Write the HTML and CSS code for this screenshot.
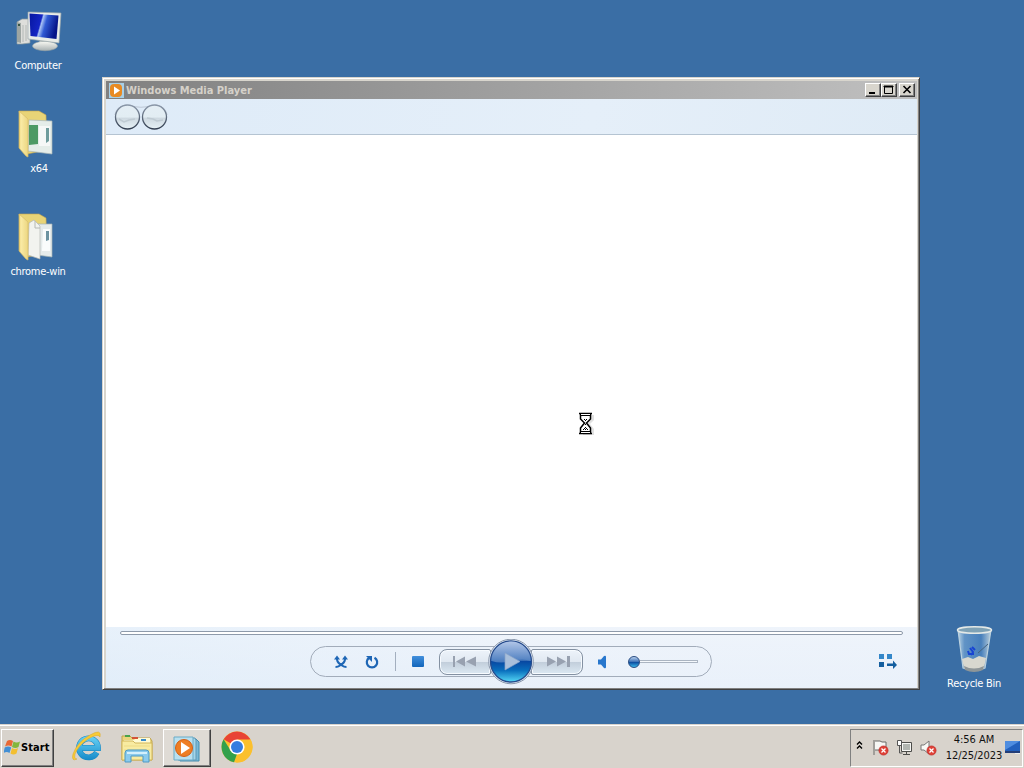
FILE: index.html
```html
<!DOCTYPE html>
<html lang="en">
<head>
<meta charset="utf-8">
<title>Windows Media Player</title>
<link rel="stylesheet" href="styles.css">
</head>
<body>
<main class="desktop">
  <div class="shortcut computer">
    <svg width="48" height="44" viewBox="0 0 48 44">
      <defs>
        <linearGradient id="screen" x1="0" x2="1" y2=".25"><stop offset="0" stop-color="#0717a0"/><stop offset=".43" stop-color="#1425c4"/><stop offset=".48" stop-color="#a9c2f4"/><stop offset=".62" stop-color="#315ad4"/><stop offset="1" stop-color="#061488"/></linearGradient>
        <linearGradient id="metal" y2="1" x2="0"><stop stop-color="#fafaf4"/><stop offset="1" stop-color="#a9b1b2"/></linearGradient>
      </defs>
      <path d="M3 14l5-3h8v24l-8 1-5 0z" fill="#dededb" stroke="#8c9b9d" stroke-width=".7"/>
      <path d="M3 14l4 1v20l-4-1z" fill="#9da5a2"/><circle cx="5" cy="17" r="1" fill="#193e2a"/>
      <path d="M9 17v17M12 17v16" stroke="#b2b8b6"/>
      <path d="M26 32h9l2 7H24z" fill="#c3c9c8"/>
      <ellipse cx="31" cy="38" rx="12.500" ry="4.700" fill="url(#metal)" stroke="#9ba4a5" stroke-width=".6"/>
      <path d="M14 4l33 1-2 30-31-4z" fill="#e9ece8" stroke="#9ba7ac" stroke-width=".7"/>
      <path d="M15.500 5.500l29 2-2 23.500-26-3z" fill="url(#screen)"/>
    </svg>
    <span>Computer</span>
  </div>
  <div class="shortcut x64">
    <svg width="42" height="52" viewBox="0 0 42 52">
      <defs><linearGradient id="fold" x2="1"><stop stop-color="#e2c35e"/><stop offset=".2" stop-color="#faeba6"/><stop offset="1" stop-color="#ecd681"/></linearGradient></defs>
      <path d="M2 3h20l7 4 1 35-20 4z" fill="#e8d477" stroke="#c7a64d" stroke-width=".6"/>
      <path d="M12 12l23 1v33l-24-3z" fill="#e5ede9" stroke="#aab8b7" stroke-width=".7"/>
      <path d="M12 17h9v19l-9 1z" fill="#4d9a64"/><path d="M22 18h11v20H22z" fill="#f6f8f7"/>
      <path d="M29 20h3v13l-3 2z" fill="#6f9c9c"/>
      <path d="M2 3l9 8v38l-2-1-7-8z" fill="url(#fold)" stroke="#d9bd67" stroke-width=".7"/>
    </svg>
    <span>x64</span>
  </div>
  <div class="shortcut chrome-folder">
    <svg width="42" height="52" viewBox="0 0 42 52">
      <path d="M2 3h20l7 4 1 35-20 4z" fill="#e8d477" stroke="#c7a64d" stroke-width=".6"/>
      <path d="M17 13h18v33l-15-2z" fill="#e5ebeb" stroke="#a4b3b4" stroke-width=".7"/>
      <path d="M26 18h7v22h-8z" fill="#fafcfc"/><path d="M29 20h3v9l-3 1z" fill="#6d93a1"/>
      <path d="M12 12l5-3 6 6v33l-12-4z" fill="#f2f3ef" stroke="#b4b8b4" stroke-width=".7"/><path d="M18 10v7h5" fill="none" stroke="#b4b8b4"/>
      <path d="M2 3l9 8v38l-2-1-7-8z" fill="url(#fold)" stroke="#d9bd67" stroke-width=".7"/>
    </svg>
    <span>chrome-win</span>
  </div>
  <div class="shortcut recycle">
    <svg width="42" height="50" viewBox="0 0 42 50">
      <defs><linearGradient id="glass" x2="1"><stop stop-color="#d2e6ef" stop-opacity=".85"/><stop offset=".2" stop-color="#6d9fd0" stop-opacity=".75"/><stop offset=".7" stop-color="#4b84c1" stop-opacity=".8"/><stop offset="1" stop-color="#d4e2e6" stop-opacity=".85"/></linearGradient></defs>
      <path d="M4 5l5 38q12 5 22 0l6-38" fill="url(#glass)" stroke="#bad1df" stroke-width="1.200"/>
      <path d="M8 34l6-2 5 2 6-3 7 2-2 10q-10 5-20 0z" fill="#d8d8cf"/><path d="M10 41q10 5 20 0l-1 4q-9 4-18 0z" fill="#8e9698"/>
      <ellipse cx="20.500" cy="5" rx="17" ry="3.300" fill="#7fa2b6" stroke="#e4e9e7" stroke-width="1.500"/>
      <path d="M16 23l3 4-2 3M20 29h-5l-1-3M21 25l-3-3" fill="none" stroke="#1744d3" stroke-width="2"/>
      <path d="M24 28l10-9" stroke="#47647e"/>
    </svg>
    <span>Recycle Bin</span>
  </div>

  <section class="window">
    <header class="titlebar">
      <svg class="title-icon" width="15" height="15" viewBox="0 0 15 15"><rect width="15" height="15" fill="#a7cfe6"/><rect x="1" y="1" width="12" height="13" rx="4" fill="#e88a22"/><path d="M5 3.500v8l6-4z" fill="#fff"/></svg>
      <h1>Windows Media Player</h1>
      <div class="window-buttons">
        <button aria-label="Minimize"><svg width="16" height="14"><path d="M4 9h6v2H4z"/></svg></button>
        <button aria-label="Maximize"><svg width="16" height="14"><path d="M3.500 3.500h8v7h-8zM3 3h9v1H3z" fill="none" stroke="#000"/></svg></button>
        <button class="close" aria-label="Close"><svg width="16" height="14"><path d="M4.500 3l7 7M11.500 3l-7 7" stroke="#000" stroke-width="1.600"/></svg></button>
      </div>
    </header>
    <nav class="toolbar">
      <svg width="56" height="32" viewBox="0 0 56 32">
        <defs><linearGradient id="nav" x2="0" y2="1"><stop stop-color="#e4eef5"/><stop offset=".5" stop-color="#e2edf3"/><stop offset=".55" stop-color="#ced9e1"/><stop offset="1" stop-color="#e6f1f6"/></linearGradient><linearGradient id="navedge" x2="0" y2="1"><stop stop-color="#8b98a9"/><stop offset="1" stop-color="#323e50"/></linearGradient></defs>
        <path d="M16 2.500Q28 6 40 2.500M2 12Q4 3 14 2M54 12Q52 3 42 2" fill="none" stroke="#bdc8d5" stroke-width="1.200"/>
        <circle cx="14.500" cy="14" r="12" fill="url(#nav)" stroke="url(#navedge)" stroke-width="1.300"/><circle cx="41.500" cy="14" r="12" fill="url(#nav)" stroke="url(#navedge)" stroke-width="1.300"/>
        <path d="M6 16l5 3 5-2 6-1M34 15l6 1 4 2 6-1" fill="none" stroke="#bfcbd3" stroke-width="1.500"/>
      </svg>
    </nav>
    <div class="content"></div>
    <footer class="player">
      <div class="seek"></div>
      <div class="control-row">
        <div class="controls">
          <svg class="shuffle" width="14" height="14" viewBox="0 0 14 14"><path d="M3 3v1.500Q3.500 8 8 10.500q2 1.500 4.500 1.500M11 3v1.500Q10.500 8 6 10.500 4 12 1.500 12" fill="none" stroke="#1e66b5" stroke-width="2"/><path d="M0 4.500L3 .500l3 4zM8 4.500l3-4 3 4z" fill="#1e66b5"/></svg>
          <svg class="repeat" width="14" height="14" viewBox="0 0 14 14"><path d="M4.300 2.800A5.200 5.200 0 1 0 9.500 2.700" fill="none" stroke="#1e66b5" stroke-width="2.200"/><path d="M1 1h6v6z" fill="#1e66b5"/></svg>
          <i class="divider"></i><i class="stop"></i>
          <div class="previous"><svg width="25" height="11" viewBox="0 0 25 11"><path d="M1 0h2v11H1zM13 .5v10L4 5.500zM24 .5v10l-10-5z" fill="#98a1b0"/></svg></div>
          <div class="play"><svg width="46" height="46" viewBox="0 0 46 46">
            <defs><linearGradient id="blue" x2="0" y2="1"><stop stop-color="#9bb5df"/><stop offset=".48" stop-color="#386db5"/><stop offset=".5" stop-color="#0848a2"/><stop offset=".72" stop-color="#096fbd"/><stop offset="1" stop-color="#54d8f6"/></linearGradient><linearGradient id="gloss" x2="0" y2="1"><stop stop-color="#b1c5e7"/><stop offset="1" stop-color="#477abe"/></linearGradient></defs>
            <circle cx="23" cy="22.500" r="22.300" fill="#e7f0fa" stroke="#8996aa"/><circle cx="23" cy="22.500" r="20.500" fill="url(#blue)" stroke="#264b8c" stroke-width="1.300"/>
            <path d="M3.500 22A19.500 19.500 0 0 1 42.500 22Q35 19 24 22T3.500 22z" fill="url(#gloss)"/><path d="M17 14v17l15-8.500z" fill="#a9bfdb" stroke="#8aa4c8" stroke-width=".7"/>
          </svg></div>
          <div class="next"><svg width="24" height="11" viewBox="0 0 24 11"><path d="M0 .5l9 5-9 5zM10 .5l9 5-9 5zM20 0h3v11h-3z" fill="#98a1b0"/></svg></div>
          <svg class="volume" width="9" height="14" viewBox="0 0 9 14"><path d="M0 4.500h3L6 1q2-1 2 1v10q0 2-2 1L3 9.500H0z" fill="#2877cd"/></svg>
          <div class="slider"><i class="thumb"></i><i class="track"></i></div>
        </div>
        <svg class="switch-view" width="18" height="15" viewBox="0 0 18 15"><path d="M0 0h5v5H0zM8 0h5v5H8z" fill="#3487c9"/><path d="M0 8h5v5H0zM8 9.500h6v-3l4 4.500-4 4v-3H8z" fill="#155f9f"/></svg>
      </div>
    </footer>
  </section>

  <svg class="cursor" width="18" height="26" viewBox="0 0 18 26">
    <path d="M5 4h11v5l-4 4 4 5v6H5z" fill="#777" opacity=".22"/>
    <path d="M2.500 3v5l4 4-4 5v5h10v-5l-4-5 4-4V3z" fill="#fff" stroke="#000" stroke-width="1.500"/><path d="M1 2.500h13M1 22.500h13" stroke="#000" stroke-width="1.300"/><path d="M3 3.500h9M3 21.500h9" stroke="#fff"/><path d="M2 4.500h11M2 20.500h11" stroke="#000"/>
    <path d="M6 8h1v1H6zM8 8h1v1H8zM7 9h1v1H7zM7 13h1v1H7zM7 16h1v1H7zM6 17h1v1H6zM8 17h1v1H8zM5 18h1v1H5zM7 18h1v1H7zM9 18h1v1H9z"/>
  </svg>
</main>

<footer class="taskbar">
  <button class="start"><svg width="17" height="17" viewBox="0 0 17 17"><path d="M3 2q3-2 6 0L7.500 7.500Q4.500 5.500 1 7.500z" fill="#e96834"/><path d="M9.500 2.500q3 2 6.500 0L14.500 8q-3 2-6.500 0z" fill="#83b73c"/><path d="M.700 8.500q3.500-2 6.500 0L5.500 14q-3-2-6 0z" fill="#438fd4"/><path d="M8 9q3 2 6 0l-1.500 5.500q-3 2-6 0z" fill="#f3bf30"/></svg><span>Start</span></button>
  <svg class="ie" width="32" height="32" viewBox="0 0 32 32">
    <defs><linearGradient id="ieblue" gradientUnits="userSpaceOnUse" x1="0" y1="4" x2="0" y2="30"><stop stop-color="#70d9fa"/><stop offset="1" stop-color="#168ac9"/></linearGradient></defs>
    <path d="M9 18H26A9.500 9.500 0 1 0 24.800 22.500" fill="none" stroke="#1789c4" stroke-width="5.800"/>
    <path d="M9 18H26A9.500 9.500 0 1 0 24.800 22.500" fill="none" stroke="url(#ieblue)" stroke-width="4.800"/>
    <path d="M5 29Q-1 32 1 24 5 12 18 5 30-2 28 7 26 3 16 9 6 16 3 24 2 29 5 29z" fill="#f8ca35" stroke="#d9a728" stroke-width=".5"/>
  </svg>
  <svg class="explorer" width="34" height="32" viewBox="0 0 34 32">
    <path d="M2 4h8l2 2h18l2 3v19H2z" fill="#ead57d" stroke="#bfa34c"/><path d="M4 8h10l2-2h14v5H4z" fill="#fffbd4"/><path d="M5 3h5v2H5z" fill="#48a34b"/><path d="M12 5h6v2h-6z" fill="#d45437"/><path d="M21 7h5v2h-5z" fill="#398bcb"/>
    <path d="M2 9h11l2 2h17v17H2z" fill="#f8eba1" stroke="#d1b65b"/><path d="M4 14h26M4 18h26" stroke="#eddb85"/>
    <path d="M5 30V21q0-3 3-3h18q3 0 3 3v9h-6v-6H11v6z" fill="#8bcbed" stroke="#4c99c5"/><path d="M7 21h20" stroke="#d4f0fc" stroke-width="2"/>
  </svg>
  <div class="task-active"><svg width="30" height="28" viewBox="0 0 30 28"><path d="M7 4h16l3 3v19H7z" fill="#79b9d6" stroke="#458caf"/><path d="M5 3h17l1 2v20H5z" fill="#a5d5e9" stroke="#6098b5"/><path d="M1 2h19v23H1z" fill="#b9e0ef" stroke="#6babc7"/><circle cx="11" cy="13" r="8.500" fill="#ee7e24" stroke="#d45f16"/><path d="M8 7v12l9-6z" fill="#fff"/></svg></div>
  <svg class="chrome" width="32" height="32" viewBox="0 0 32 32"><circle cx="16" cy="16" r="15.500" fill="#fbc02d"/><path d="M16 16L2.600 8.300A15.500 15.500 0 0 1 29.400 8.300z" fill="#e84435"/><path d="M2.600 8.300L9.900 20 16 23l-3 8.200A15.500 15.500 0 0 1 2.600 8.300z" fill="#33a14c"/><path d="M16 8.500h13.500A15.500 15.500 0 0 1 15 31.500L22.500 20z" fill="#fbc02d"/><circle cx="16" cy="16" r="7.600" fill="#fff"/><circle cx="16" cy="16" r="6" fill="#347de0"/></svg>
  <div class="tray">
    <svg class="chevrons" width="7" height="9" viewBox="0 0 7 9"><path d="M1 3.500L3.500 1 6 3.500M1 7.500L3.500 5 6 7.500" fill="none" stroke="#000" stroke-width="1.400"/></svg>
    <svg class="flag" width="18" height="18" viewBox="0 0 18 18"><path d="M2 1v15M3 2h5l2 1h4v9h-5L8 11H3" fill="#f7f7f4" stroke="#6b6b68"/><circle cx="11.500" cy="11.500" r="4.600" fill="#df4238" stroke="#b91f1c" stroke-width=".6"/><path d="M9.500 9.500l4 4M13.500 9.500l-4 4" stroke="#fff" stroke-width="1.300"/></svg>
    <svg class="network" width="17" height="17" viewBox="0 0 17 17"><path d="M5.500 3.500h10v9h-10zM7 15.500h7M10.500 13v2" fill="#f5f5f2" stroke="#4d4d4a"/><path d="M7 5h7v6H7z" fill="#b1b5b0"/><path d="M1.500 1.500h4v5h-4zM3.500 7v7h3" fill="none" stroke="#555"/><path d="M2 2h3v4H2z" fill="#fff"/></svg>
    <svg class="sound" width="18" height="18" viewBox="0 0 18 18"><path d="M1 6h3l5-4v13l-5-4H1z" fill="#f8f8f5" stroke="#777"/><circle cx="11.500" cy="11.500" r="4.600" fill="#df4238" stroke="#b91f1c" stroke-width=".6"/><path d="M9.500 9.500l4 4M13.500 9.500l-4 4" stroke="#fff" stroke-width="1.300"/></svg>
    <div class="clock"><span class="time">4:56 AM</span><span class="date">12/25/2023</span></div>
    <svg class="monitor" width="15" height="14" viewBox="0 0 15 14"><path d="M0 0h15v11H0z" fill="#2260bd"/><path d="M0 0h15L0 9z" fill="#4f8de0"/><path d="M0 10h15v2H0z" fill="#243e77"/><path d="M10 12h5v1h-5z" fill="#eee"/></svg>
  </div>
</footer>
</body>
</html>
```
FILE: styles.css
```css
* { box-sizing: border-box; }
body { width: 1024px; height: 768px; margin: 0; overflow: hidden; display: flex; flex-direction: column; background: #3a6ea5; font-family: Tahoma, "DejaVu Sans Condensed", "DejaVu Sans", sans-serif; font-stretch: condensed; font-size: 11px; color: #111; }
svg { display: block; flex: none; }
button { margin: 0; padding: 0; color: inherit; font: inherit; }
.desktop { position: relative; height: 724px; flex: none; }
.shortcut { position: absolute; width: 76px; display: flex; flex-direction: column; align-items: center; color: #fff; line-height: 14px; white-space: nowrap; }
.shortcut span { letter-spacing: -.28px; }
.computer { left: 0; top: 8px; }
.computer span { margin-top: 7px; }
.x64 { left: 0; top: 108px; }
.x64 span, .chrome-folder span { margin-top: 2px; }
.x64 span { padding-left: 2px; }
.chrome-folder { left: 0; top: 211px; }
.recycle { left: 936px; top: 625px; }
.recycle svg { margin-left: 2px; }
.recycle span { margin-top: 2px; }

.window { position: absolute; left: 102px; top: 77px; width: 818px; height: 613px; padding: 2px 1px 1px 2px; background: #d8d5cd; border: 1px solid; border-color: #d8d5cd #404040 #404040 #d8d5cd; box-shadow: inset 1px 1px #fff, inset -1px -1px #808080; display: flex; flex-direction: column; }
.titlebar { height: 18px; margin: 1px 1px 0; padding: 0 1px 0 3px; display: flex; align-items: center; flex: none; background: linear-gradient(90deg, #808080, #c0c0c0); }
.titlebar h1 { margin: 2px 0 0 2px; font-size: 11px; line-height: 18px; color: #d5d1c9; font-weight: bold; letter-spacing: 0; }
.window-buttons { margin-left: auto; margin-right: 1px; display: flex; }
.window-buttons button { width: 16px; height: 14px; border: 1px solid; border-color: #fff #404040 #404040 #fff; background: #d8d5cd; box-shadow: inset -1px -1px #808080; }
.window-buttons svg { margin: -1px; }
.window-buttons .close { margin-left: 2px; }
.toolbar { height: 36px; margin: 0 1px; padding: 4px 0 0 7px; flex: none; background: linear-gradient(100deg, #deebf8, #e5eff9 60%, #dfebf6); border-bottom: 1px solid #b5c4d2; }
.content { flex: 1; margin: 0 1px; background: #fff; }
.player { height: 61px; margin: 0 1px; padding: 4px 14px 0; background: linear-gradient(90deg, rgba(225,238,250,.6), rgba(237,243,251,.6) 50%, rgba(237,243,251,.7)), linear-gradient(#f1f5fb, #e3edf8); }
.seek { height: 4px; border: 1px solid #8e9aaa; border-radius: 2px; background: #fff; }
.control-row { display: flex; align-items: center; padding-top: 11px; }
.controls { width: 402px; height: 31px; margin-left: 190px; border: 1px solid #a2acba; border-radius: 16px; display: flex; align-items: center; }
.shuffle { margin-left: 23px; }
.repeat { margin-left: 17px; }
.divider { width: 1px; height: 19px; margin-left: 16px; background: #a3afbf; }
.stop { width: 12px; height: 11px; margin-left: 16px; border-radius: 1px; background: linear-gradient(#418fdc, #1265bb); }
.previous, .next { width: 52px; height: 26px; display: flex; align-items: center; flex: none; border: 1px solid #8491a2; box-shadow: inset 0 0 0 1px #f7fbff; background: linear-gradient(#edf3fa, #e0e8f1 49%, #c2cedb 51%, #dce9f3); }
.previous { margin-left: 15px; padding-left: 12px; border-radius: 8px 2px 2px 8px; }
.play { position: relative; z-index: 1; width: 46px; height: 46px; margin: -8px -3px; flex: none; }
.next { padding-left: 15px; border-radius: 2px 8px 8px 2px; }
.volume { margin-left: 15px; }
.slider { display: flex; align-items: center; margin-left: 21px; }
.thumb { width: 12px; height: 12px; border: 1px solid #294c82; border-radius: 50%; background: linear-gradient(#b8d1ef, #4476b9 45%, #08459b 50%, #39b6e9); }
.track { width: 58px; height: 3px; border: 1px solid #abb5c2; border-left: 0; background: #f5f9fd; }
.switch-view { margin-left: 167px; }
.cursor { position: absolute; left: 578px; top: 411px; }

.taskbar { height: 44px; flex: none; display: flex; align-items: center; padding-top: 2px; background: #d8d3cc; border-top: 1px solid #d8d3cc; box-shadow: inset 0 1px #fff; }
.start { width: 53px; height: 38px; margin-left: 1px; padding-left: 2px; display: flex; align-items: center; gap: 1px; background: #d8d3cc; border: 1px solid; border-color: #fff #404040 #404040 #fff; box-shadow: inset -1px -1px #808080; font-size: 11px; font-weight: bold; color: #000; }
.start span { letter-spacing: .1px; margin-left: -1px; }
.ie { margin-left: 18px; margin-top: -3px; }
.explorer { margin-left: 16px; }
.task-active { width: 48px; height: 38px; margin-left: 9px; padding: 5px 0 0 9px; background: #dfdbd5; border: 1px solid; border-color: #fff #404040 #404040 #fff; box-shadow: inset -1px -1px #808080; }
.chrome { margin-left: 10px; margin-top: -2px; }
.tray { width: 173px; height: 38px; margin-left: auto; margin-right: 1px; display: flex; align-items: center; border: 1px solid; border-color: #808080 #fff #fff #808080; }
.chevrons { margin: -4px 0 0 5px; }
.flag { margin-left: 9px; }
.network { margin-left: 6px; }
.sound { margin-left: 7px; }
.clock { width: 62px; height: 32px; margin-left: 5px; display: flex; flex-direction: column; align-items: center; line-height: 16px; letter-spacing: -.05px; white-space: nowrap; }
.monitor { margin-left: 0; margin-top: 1px; }
```
